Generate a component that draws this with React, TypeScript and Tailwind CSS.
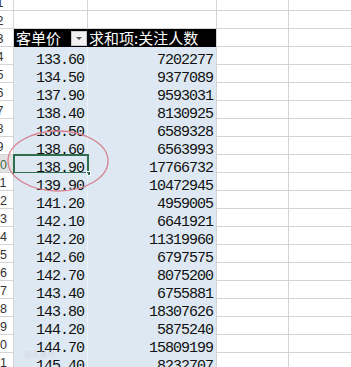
import React from "react";

const rows: [string, string][] = [
  ["133.60", "7202277"],
  ["134.50", "9377089"],
  ["137.90", "9593031"],
  ["138.40", "8130925"],
  ["138.50", "6589328"],
  ["138.60", "6563993"],
  ["138.90", "17766732"],
  ["139.90", "10472945"],
  ["141.20", "4959005"],
  ["142.10", "6641921"],
  ["142.20", "11319960"],
  ["142.60", "6797575"],
  ["142.70", "8075200"],
  ["143.40", "6755881"],
  ["143.80", "18307626"],
  ["144.20", "5875240"],
  ["144.70", "15809199"],
  ["145.40", "8232707"],
];

const mono = { fontFamily: '"Liberation Mono", "DejaVu Sans Mono", monospace' };
const sans = { fontFamily: '"Liberation Sans", Arial, sans-serif' };
const cjk = { fontFamily: '"Noto Sans CJK SC", "Noto Sans", sans-serif' };

function RowHead({ n, selected }: { n: number; selected?: boolean }) {
  return (
    <div
      className={
        "w-[14px] h-[18px] shrink-0 overflow-hidden border-r border-b border-[#d4d4d4] flex items-end " +
        (selected ? "bg-[#e2e2e2] text-[#3f6b47]" : "bg-white text-[#333]")
      }
      style={sans}
    >
      <div className="w-[26px] -ml-[13px] shrink-0 text-center text-[12.5px] leading-[12px] pb-[1px]">
        {n}
      </div>
    </div>
  );
}

function EmptyCells() {
  return (
    <>
      <div className="w-[74px] h-[18px] shrink-0 border-r border-b border-[#d4d4d4]" />
      <div className="w-[129px] h-[18px] shrink-0 border-r border-b border-[#d4d4d4]" />
      <div className="w-[72px] h-[18px] shrink-0 border-r border-b border-[#d4d4d4]" />
      <div className="flex-1 h-[18px] border-b border-[#d4d4d4]" />
    </>
  );
}

function TrailingCells() {
  return (
    <>
      <div className="w-[72px] h-[18px] shrink-0 border-r border-b border-[#d4d4d4]" />
      <div className="flex-1 h-[18px] border-b border-[#d4d4d4]" />
    </>
  );
}

export default function App() {
  return (
    <div className="w-[351px] h-[367px] overflow-hidden bg-white relative">
      <div className="-mt-[7px] flex flex-col">
        <div className="flex">
          <RowHead n={1} />
          <EmptyCells />
        </div>
        <div className="flex">
          <RowHead n={2} />
          <EmptyCells />
        </div>
        <div className="flex">
          <RowHead n={3} />
          <div className="w-[74px] h-[18px] shrink-0 bg-black flex items-center justify-between pl-[2px] pr-[1px]">
            <span className="text-white text-[15px] leading-[18px]" style={cjk}>
              客单价
            </span>
            <div className="w-[16px] h-[15px] bg-[#f2f2f2] border border-[#c8c8c8] flex items-center justify-center">
              <svg width="8" height="5" viewBox="0 0 8 5">
                <path d="M1 1 L7 1 L4 4 Z" fill="#555" />
              </svg>
            </div>
          </div>
          <div className="w-[129px] h-[18px] shrink-0 bg-black border-r border-[#d4d4d4] flex items-center pl-[1px]">
            <span className="text-white text-[15px] leading-[18px] whitespace-nowrap" style={cjk}>
              求和项:关注人数
            </span>
          </div>
          <TrailingCells />
        </div>
        {rows.map(([a, b], i) => {
          const n = i + 4;
          const sel = n === 10;
          return (
            <div className="flex" key={n}>
              <RowHead n={n} selected={sel} />
              <div className="w-[74px] h-[18px] shrink-0 bg-[#dde8f3] border-r border-[#edf2f8] flex items-end justify-end pr-[3px] relative">
                <span className="text-[15px] leading-[8px] tracking-[-1px] text-[#111]" style={mono}>
                  {a}
                </span>
                {sel && (
                  <div className="absolute -left-[1px] -top-[1px] -right-[2px] -bottom-[1px] border-2 border-[#2f6e4e]">
                    <div className="absolute -right-[4px] -bottom-[4px] w-[5px] h-[5px] bg-[#2f6e4e] border border-white" />
                  </div>
                )}
              </div>
              <div className="w-[129px] h-[18px] shrink-0 bg-[#dde8f3] border-r border-[#d4d4d4] flex items-end justify-end pr-[3px]">
                <span className="text-[15px] leading-[8px] tracking-[-1px] text-[#111]" style={mono}>
                  {b}
                </span>
              </div>
              <TrailingCells />
            </div>
          );
        })}
      </div>
      <svg className="absolute left-0 top-0 pointer-events-none" width="351" height="367">
        <ellipse cx="58" cy="161" rx="50" ry="30" fill="none" stroke="#d7828f" strokeWidth="1.3" />
      </svg>
      <div
        className="absolute left-[24px] top-[349px] text-[8px] leading-[10px] text-[#cfcfcf] opacity-60"
        style={cjk}
      >
        @头条号
      </div>
    </div>
  );
}
